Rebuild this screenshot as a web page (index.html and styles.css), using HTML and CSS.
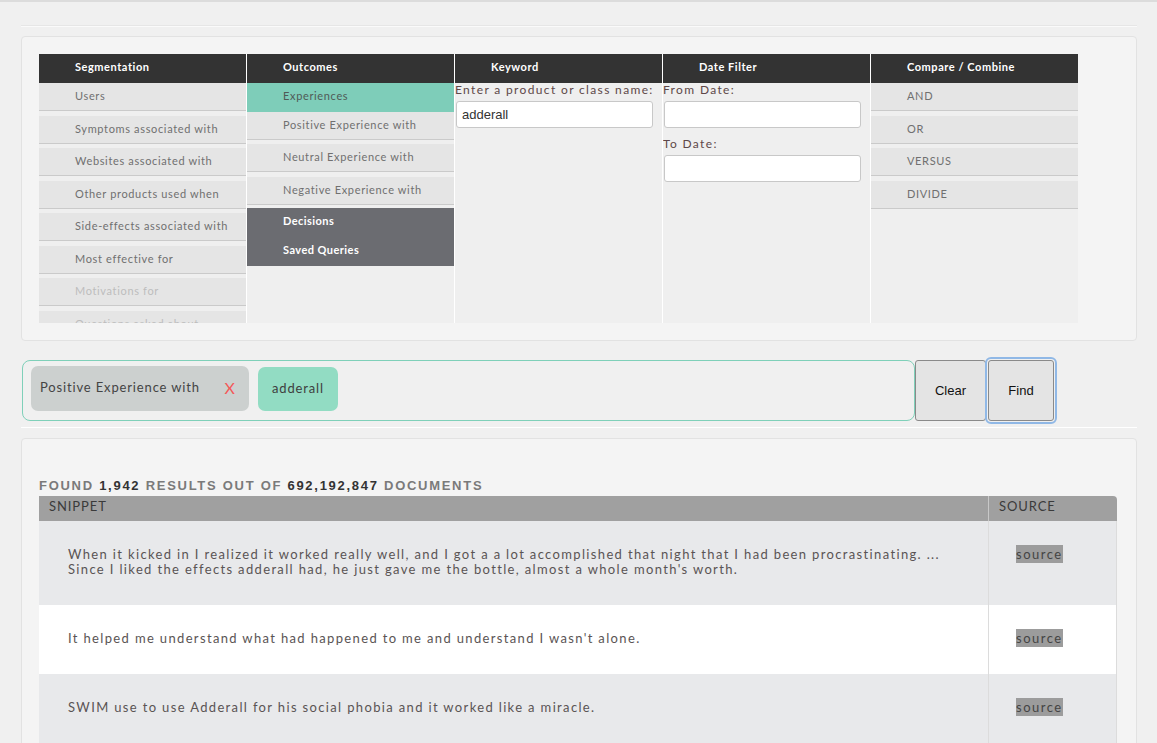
FILE: index.html
```html
<!DOCTYPE html>
<html>
<head>
<meta charset="utf-8">
<link rel="stylesheet" href="styles.css">
</head>
<body>
<div class="topline"></div>
<div class="page">
  <div class="rule rule-top"></div>
  <section class="panel builder">
    <div class="cols">
      <div class="col">
        <div class="col-head">Segmentation</div>
        <div class="col-body">
          <div class="item">Users</div>
          <div class="item">Symptoms associated with</div>
          <div class="item">Websites associated with</div>
          <div class="item">Other products used when</div>
          <div class="item">Side-effects associated with</div>
          <div class="item">Most effective for</div>
          <div class="item faded">Motivations for</div>
          <div class="item faded">Questions asked about</div>
        </div>
      </div>
      <div class="col">
        <div class="col-head">Outcomes</div>
        <div class="col-body">
          <div class="item active">Experiences</div>
          <div class="item">Positive Experience with</div>
          <div class="item">Neutral Experience with</div>
          <div class="item">Negative Experience with</div>
          <div class="group">
            <div class="group-item">Decisions</div>
            <div class="group-item">Saved Queries</div>
          </div>
        </div>
      </div>
      <div class="col">
        <div class="col-head">Keyword</div>
        <div class="col-body">
          <label class="field-label">Enter a product or class name:</label>
          <input class="field" type="text" value="adderall">
        </div>
      </div>
      <div class="col">
        <div class="col-head">Date Filter</div>
        <div class="col-body">
          <label class="field-label">From Date:</label>
          <input class="field" type="text">
          <label class="field-label second">To Date:</label>
          <input class="field" type="text">
        </div>
      </div>
      <div class="col">
        <div class="col-head">Compare / Combine</div>
        <div class="col-body">
          <div class="item">AND</div>
          <div class="item">OR</div>
          <div class="item">VERSUS</div>
          <div class="item">DIVIDE</div>
        </div>
      </div>
    </div>
  </section>

  <div class="query-row">
    <div class="query-box">
      <div class="chip chip-gray"><span>Positive Experience with</span><span class="chip-x">X</span></div>
      <div class="chip chip-teal">adderall</div>
    </div>
    <button class="btn btn-clear">Clear</button>
    <button class="btn btn-focus">Find</button>
  </div>

  <div class="rule rule-mid"></div>

  <section class="panel results">
    <div class="found">FOUND <b>1,942</b> RESULTS OUT OF <b>692,192,847</b> DOCUMENTS</div>
    <table class="rtable">
      <thead>
        <tr><th class="c-snip">SNIPPET</th><th class="c-src">SOURCE</th></tr>
      </thead>
      <tbody>
        <tr class="odd">
          <td class="c-snip">When it kicked in I realized it worked really well, and I got a a lot accomplished that night that I had been procrastinating. ...<br>Since I liked the effects adderall had, he just gave me the bottle, almost a whole month's worth.</td>
          <td class="c-src"><span class="src">source</span></td>
        </tr>
        <tr class="even">
          <td class="c-snip">It helped me understand what had happened to me and understand I wasn't alone.</td>
          <td class="c-src"><span class="src">source</span></td>
        </tr>
        <tr class="odd">
          <td class="c-snip">SWIM use to use Adderall for his social phobia and it worked like a miracle.</td>
          <td class="c-src"><span class="src">source</span></td>
        </tr>
      </tbody>
    </table>
  </section>
</div>
</body>
</html>
```

FILE: styles.css
```css
html, body {
  margin: 0;
  padding: 0;
}
body {
  background: #f0f0f0;
  font-family: Lato, "Open Sans", sans-serif;
  color: #555;
  overflow: hidden;
  height: 743px;
}
.topline {
  height: 2px;
  background: #dcdcdc;
}
.page {
  padding: 0 20px 0 21px;
}
.rule {
  height: 1px;
  background: #fafafa;
  border-top: 1px solid #e6e6e6;
}
.rule-top {
  margin-top: 23px;
}
.panel {
  background: #f4f4f4;
  border: 1px solid #e2e2e2;
  border-radius: 4px;
}
.builder {
  margin-top: 9px;
  padding: 17px 58px 17px 17px;
}
.cols {
  display: grid;
  grid-template-columns: repeat(5, 207px);
  column-gap: 1px;
  background: #ffffff;
  width: 1039px;
}
.col {
  display: flex;
  flex-direction: column;
}
.col-head {
  height: 29px;
  line-height: 26px;
  background: #333333;
  color: #ffffff;
  font-size: 11px;
  font-weight: 700;
  letter-spacing: 0.55px;
  padding-left: 36px;
}
.col-body {
  height: 240px;
  background: #efefef;
  overflow: hidden;
}
.item {
  height: 27px;
  line-height: 26px;
  background: #e5e5e5;
  border-bottom: 1px solid #cacaca;
  margin-bottom: 4.5px;
  padding-left: 36px;
  font-size: 11px;
  letter-spacing: 0.65px;
  color: #707070;
}
.item.faded {
  color: #bdbdbd;
}
.item.active {
  background: #7ecdb9;
  border-bottom: none;
  height: 28.5px;
  line-height: 26px;
  margin-bottom: 0;
  color: #505a57;
}
.group {
  background: #6b6c71;
  margin-top: -1px;
}
.group-item {
  height: 29px;
  line-height: 26px;
  padding-left: 36px;
  color: #ffffff;
  font-size: 11px;
  font-weight: 700;
  letter-spacing: 0.45px;
}
.field-label {
  display: block;
  font-size: 12px;
  letter-spacing: 1.35px;
  color: #5e4848;
  line-height: 14px;
  padding-top: 0;
  white-space: nowrap;
}
.field-label.second {
  margin-top: 9px;
}
.field {
  display: block;
  box-sizing: border-box;
  margin: 4px 0 0 1px;
  width: 197px;
  height: 27px;
  border: 1px solid #c8c8c8;
  border-radius: 3px;
  background: #ffffff;
  font-family: "Liberation Sans", Arial, sans-serif;
  font-size: 13px;
  color: #333;
  padding: 0 5px;
  outline: none;
}
.query-row {
  display: flex;
  align-items: flex-start;
  margin-top: 18px;
  height: 62px;
}
.query-box {
  box-sizing: border-box;
  width: 893px;
  height: 61px;
  margin-top: 1px;
  margin-left: 1px;
  border: 1px solid #7fd0b9;
  border-radius: 8px;
  display: flex;
  align-items: flex-start;
  gap: 9px;
  padding: 5px 8px;
}
.chip {
  height: 45px;
  line-height: 43px;
  border-radius: 7px;
  font-size: 13px;
  letter-spacing: 0.85px;
  color: #444;
  white-space: nowrap;
}
.chip-gray {
  box-sizing: border-box;
  width: 218px;
  background: #ccd0cf;
  padding: 0 14px 0 9px;
  display: flex;
  justify-content: space-between;
}
.chip-x {
  color: #f45858;
  font-size: 16px;
  font-weight: 400;
  letter-spacing: 0;
}
.chip-teal {
  background: #92dcc3;
  margin-top: 1px;
  height: 44px;
  padding: 0 14px;
  color: #3e3e3e;
}
.btn {
  box-sizing: border-box;
  height: 61px;
  margin-top: 1px;
  border: 1px solid #8a8a8a;
  border-radius: 3px;
  background: #e4e4e4;
  font-family: "Liberation Sans", Arial, sans-serif;
  font-size: 13px;
  color: #111;
  padding: 0;
}
.btn-clear {
  width: 71px;
}
.btn-focus {
  width: 66px;
  margin-left: 2px;
  outline: 2px solid #90b8e6;
  outline-offset: 1px;
}
.rule-mid {
  margin-top: 6px;
  background: #ffffff;
  border-top: none;
  height: 1px;
}
.results {
  margin-top: 10px;
  padding: 40px 19px 0 17px;
  height: 330px;
}
.found {
  font-family: "Liberation Sans", Arial, sans-serif;
  font-weight: 700;
  font-size: 13px;
  letter-spacing: 1.72px;
  color: #7a7a7a;
  line-height: 14px;
  margin-bottom: 3px;
}
.found b {
  color: #333;
}
.rtable {
  width: 1078px;
  border-collapse: collapse;
  font-size: 13px;
  letter-spacing: 1.35px;
}
.rtable th {
  background: #a0a0a0;
  color: #3a3a3a;
  font-weight: 400;
  text-align: left;
  height: 25px;
  line-height: 21px;
  padding: 0 0 4px 10px;
  box-sizing: border-box;
  font-size: 13px;
  letter-spacing: 0.9px;
}
.rtable th.c-src {
  border-top-right-radius: 4px;
  border-left: 1px solid #c8c8c8;
}
.rtable td {
  padding: 26px 0 28px 29px;
  line-height: 15px;
  color: #5a5454;
  vertical-align: top;
}
.rtable td.c-src {
  width: 100px;
  padding-left: 27px;
  border-left: 1px solid #dcdcdc;
  border-right: 1px solid #dcdcdc;
  white-space: nowrap;
}
.rtable tr.odd td {
  background: #e8e9eb;
}
.rtable tr.even td {
  background: #ffffff;
}
.src {
  background: #9c9c9c;
  color: #444;
  padding: 1px 0;
  letter-spacing: 1.5px;
}
```
